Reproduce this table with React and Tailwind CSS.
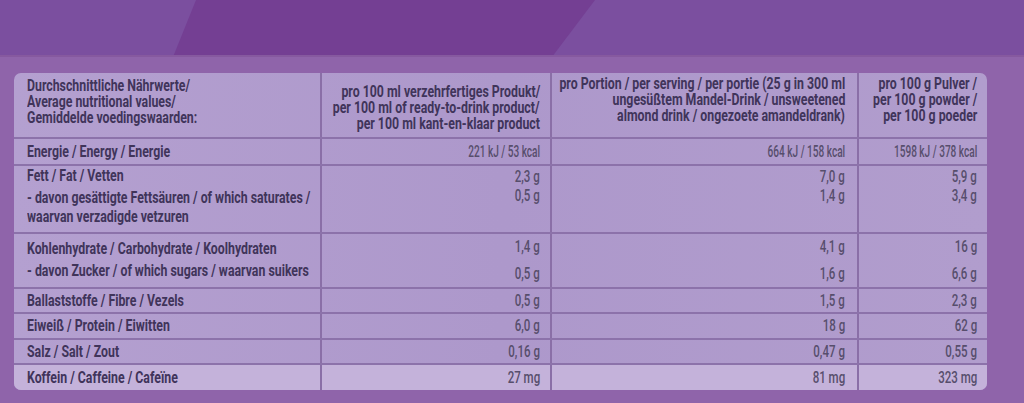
import React from "react";

const COLS = "grid grid-cols-[308px_230px_307px_128px]";

function L({ children, className = "" }) {
  return (
    <span className={"inline-block origin-left scale-x-[0.77] whitespace-nowrap font-bold text-[#40345a] " + className}>
      {children}
    </span>
  );
}

function V({ children }) {
  return (
    <span className="inline-block origin-right scale-x-[0.72] whitespace-nowrap font-medium text-[#574e6c]">
      {children}
    </span>
  );
}

function E({ children }) {
  return (
    <span className="inline-block origin-right scale-x-[0.63] whitespace-nowrap font-medium text-[#574e6c]">
      {children}
    </span>
  );
}

function H({ children }) {
  return (
    <span className="inline-block origin-right scale-x-[0.77] whitespace-nowrap font-bold text-[#40345a]">
      {children}
    </span>
  );
}

const cell = "border-r-2 border-[#8a6fa7] min-w-0";

function SimpleRow({ label, v1, v2, v3, h, last }) {
  return (
    <div
      className={
        COLS +
        " border-t-2 border-[#8c72aa] text-[16px] leading-[16px] " +
        h +
        (last ? " bg-[#c4b2da]" : "")
      }
    >
      <div className={cell + " flex items-center pl-[13px]"}>
        <L>{label}</L>
      </div>
      <div className={cell + " flex items-center justify-end pr-[10px]"}>
        <V>{v1}</V>
      </div>
      <div className={cell + " flex items-center justify-end pr-[12px]"}>
        <V>{v2}</V>
      </div>
      <div className="flex min-w-0 items-center justify-end pr-[10px]">
        <V>{v3}</V>
      </div>
    </div>
  );
}

export default function App() {
  return (
    <div
      className="flex h-[403px] w-[1024px] flex-col overflow-hidden bg-[#8f64aa]"
      style={{ fontFamily: "Roboto, 'Liberation Sans', sans-serif" }}
    >
      <div className="h-[57px] w-full shrink-0 bg-[#7b4f9f]">
        <svg width="1024" height="57" viewBox="0 0 1024 57" className="block">
          <polygon points="196,0 595,0 552,57 173,57" fill="#743f93" />
          <rect x="0" y="55" width="1024" height="2" fill="#86599f" />
        </svg>
      </div>
      <div className="pl-[14px] pt-[16px]">
        <div className="w-[973px] overflow-hidden rounded-[7px] bg-[linear-gradient(90deg,#b4a0d0_0%,#ad98cb_50%,#b19dcd_100%)]">
          {/* header */}
          <div className={COLS + " h-[64px] text-[16px] leading-[16px]"}>
            <div className={cell + " flex flex-col pl-[13px] pt-[5px]"}>
              <L>Durchschnittliche Nährwerte/</L>
              <L>Average nutritional values/</L>
              <L>Gemiddelde voedingswaarden:</L>
            </div>
            <div className={cell + " flex flex-col items-end pr-[10px] pt-[11px]"}>
              <H>pro 100 ml verzehrfertiges Produkt/</H>
              <H>per 100 ml of ready-to-drink product/</H>
              <H>per 100 ml kant-en-klaar product</H>
            </div>
            <div className={cell + " flex flex-col items-end pr-[12px] pt-[3px]"}>
              <H>pro Portion / per serving / per portie (25 g in 300 ml</H>
              <H>ungesüßtem Mandel-Drink / unsweetened</H>
              <H>almond drink / ongezoete amandeldrank)</H>
            </div>
            <div className="flex min-w-0 flex-col items-end pr-[10px] pt-[3px]">
              <H>pro 100 g Pulver /</H>
              <H>per 100 g powder /</H>
              <H>per 100 g poeder</H>
            </div>
          </div>

          {/* Energie */}
          <div className={COLS + " h-[27px] border-t-2 border-[#8c72aa] text-[16px] leading-[16px]"}>
            <div className={cell + " flex items-center pl-[13px]"}>
              <L>Energie / Energy / Energie</L>
            </div>
            <div className={cell + " flex items-center justify-end pr-[10px]"}>
              <E>221 kJ / 53 kcal</E>
            </div>
            <div className={cell + " flex items-center justify-end pr-[12px]"}>
              <E>664 kJ / 158 kcal</E>
            </div>
            <div className="flex min-w-0 items-center justify-end pr-[10px]">
              <E>1598 kJ / 378 kcal</E>
            </div>
          </div>

          {/* Fett */}
          <div className={COLS + " h-[68px] border-t-2 border-[#8c72aa] text-[16px] leading-[16px]"}>
            <div className={cell + " flex flex-col pl-[13px] pt-[2px]"}>
              <L>Fett / Fat / Vetten</L>
              <L className="mt-[6px]">- davon gesättigte Fettsäuren / of which saturates /</L>
              <L className="mt-[3px]">waarvan verzadigde vetzuren</L>
            </div>
            <div className={cell + " flex flex-col items-end gap-[3px] pr-[10px] pt-[3px]"}>
              <V>2,3 g</V>
              <V>0,5 g</V>
            </div>
            <div className={cell + " flex flex-col items-end gap-[3px] pr-[12px] pt-[3px]"}>
              <V>7,0 g</V>
              <V>1,4 g</V>
            </div>
            <div className="flex min-w-0 flex-col items-end gap-[3px] pr-[10px] pt-[3px]">
              <V>5,9 g</V>
              <V>3,4 g</V>
            </div>
          </div>

          {/* Kohlenhydrate */}
          <div className={COLS + " h-[55px] border-t-2 border-[#8c72aa] text-[16px] leading-[16px]"}>
            <div className={cell + " flex flex-col gap-[6px] pl-[13px] pt-[7px]"}>
              <L>Kohlenhydrate / Carbohydrate / Koolhydraten</L>
              <L>- davon Zucker / of which sugars / waarvan suikers</L>
            </div>
            <div className={cell + " flex flex-col items-end gap-[11px] pr-[10px] pt-[5px]"}>
              <V>1,4 g</V>
              <V>0,5 g</V>
            </div>
            <div className={cell + " flex flex-col items-end gap-[11px] pr-[12px] pt-[5px]"}>
              <V>4,1 g</V>
              <V>1,6 g</V>
            </div>
            <div className="flex min-w-0 flex-col items-end gap-[11px] pr-[10px] pt-[5px]">
              <V>16 g</V>
              <V>6,6 g</V>
            </div>
          </div>

          <SimpleRow h="h-[25px]" label="Ballaststoffe / Fibre / Vezels" v1="0,5 g" v2="1,5 g" v3="2,3 g" />
          <SimpleRow h="h-[26px]" label="Eiweiß / Protein / Eiwitten" v1="6,0 g" v2="18 g" v3="62 g" />
          <SimpleRow h="h-[25px]" label="Salz / Salt / Zout" v1="0,16 g" v2="0,47 g" v3="0,55 g" />
          <SimpleRow h="h-[27px]" label="Koffein / Caffeine / Cafeïne" v1="27 mg" v2="81 mg" v3="323 mg" last />
        </div>
      </div>
    </div>
  );
}
